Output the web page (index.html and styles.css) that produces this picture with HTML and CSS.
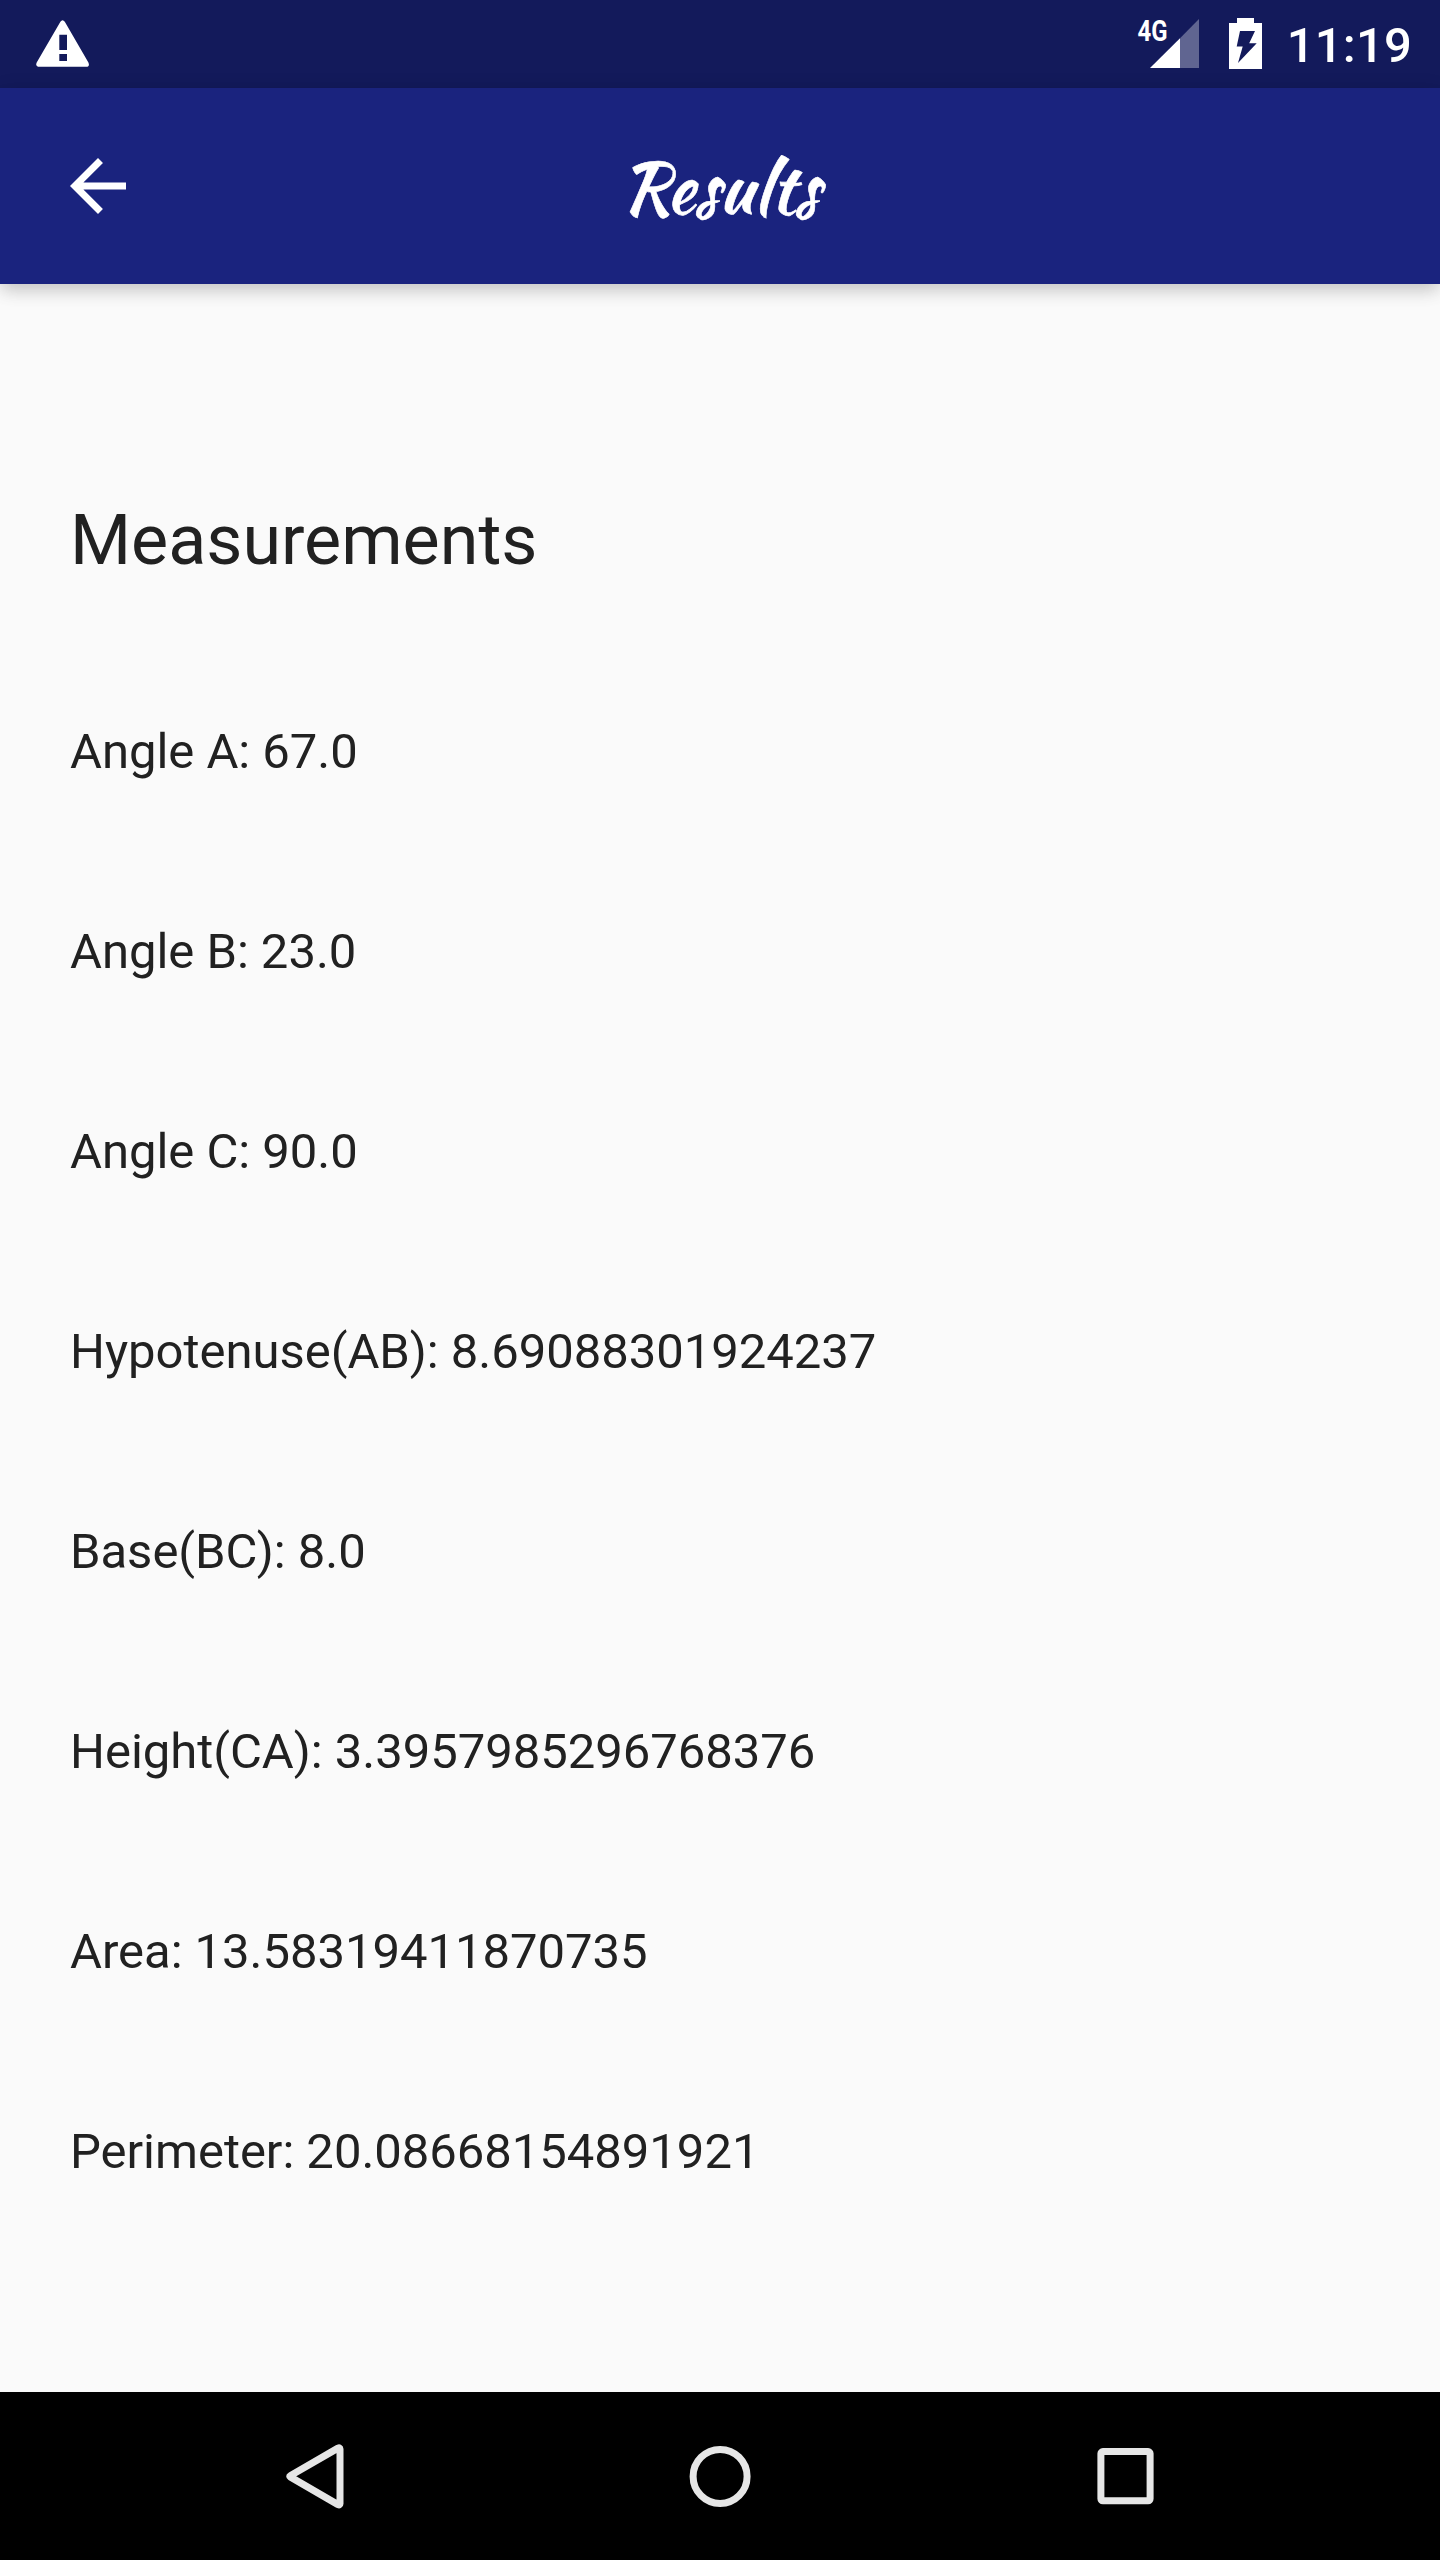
FILE: index.html
```html
<!DOCTYPE html>
<html lang="en">
<head>
<meta charset="utf-8">
<title>Results</title>
<link rel="stylesheet" href="styles.css">
</head>
<body>
<div class="screen">
  <div class="status-bar">
    <svg class="warning-icon" width="54" height="48" viewBox="0 0 54 48">
      <path fill="#fff" fill-rule="evenodd" d="M2 46.7Q-.8 46 .7 42.5L24.4 1.8Q26.5-1.5 28.8 1.8L52.4 42.5Q53.8 46 51.5 46.7ZM23.3 14.7V30H31V14.7ZM23.3 34V41H31V34Z"/>
    </svg>
    <div class="status-icons">
      <svg class="signal-icon" width="64" height="50" viewBox="0 0 64 50">
        <path fill="#fff" opacity=".33" d="M45 19.2 64 0v49H45z"/>
        <path fill="#fff" d="M15 49 45 19.2V49z"/>
        <text class="network" x="2.5" y="22" textLength="30" lengthAdjust="spacingAndGlyphs">4G</text>
      </svg>
      <svg class="battery-icon" width="33" height="51" viewBox="0 0 33 51">
        <path fill="#fff" fill-rule="evenodd" d="M8 0h17v5h8v46H0V5h8zM11 13 7.7 28.5h6L9 45 27.7 25.2h-7.5L26 13z"/>
      </svg>
      <span class="clock">11:19</span>
    </div>
  </div>
  <header class="app-bar">
    <svg class="back-arrow" width="84" height="84" viewBox="0 0 24 24">
      <path fill="#fff" d="M20 11H7.83l5.59-5.59L12 4l-8 8 8 8 1.41-1.41L7.83 13H20v-2z"/>
    </svg>
    <h1 class="title">Results</h1>
  </header>
  <main class="content">
    <h2 class="heading">Measurements</h2>
    <p class="row">Angle A: 67.0</p>
    <p class="row">Angle B: 23.0</p>
    <p class="row">Angle C: 90.0</p>
    <p class="row">Hypotenuse(AB): 8.69088301924237</p>
    <p class="row">Base(BC): 8.0</p>
    <p class="row">Height(CA): 3.3957985296768376</p>
    <p class="row">Area: 13.58319411870735</p>
    <p class="row">Perimeter: 20.08668154891921</p>
  </main>
  <nav class="nav-bar">
    <svg width="84" height="84" viewBox="0 0 84 84"><path class="outline" d="M17.2 41.8 65 14.1Q67 13.2 67 15V69.7Q67 71.5 65 70.6L17.2 42.9Q16.2 42.3 17.2 41.8Z"/></svg>
    <svg width="84" height="84" viewBox="0 0 84 84"><circle class="outline" cx="42.1" cy="42.4" r="27"/></svg>
    <svg width="84" height="84" viewBox="0 0 84 84"><rect class="outline" x="17.9" y="17.6" width="49.2" height="49.2" rx="2"/></svg>
  </nav>
</div>
</body>
</html>
```
FILE: styles.css
```css
* { box-sizing: border-box; margin: 0; }

body {
  font-family: Roboto, sans-serif;
  background: #fafafa;
  color: #212121;
}

.screen {
  display: flex;
  flex-direction: column;
  width: 1440px;
  height: 2560px;
}

.status-bar {
  display: flex;
  justify-content: space-between;
  height: 88px;
  padding: 18px 28px 0 36px;
  background: #131a5b;
  color: #fff;
}

.warning-icon { margin-top: 2px; }

.status-icons {
  display: flex;
  align-items: flex-start;
}

.signal-icon { margin: 1px 30px 0 0; overflow: visible; }
.battery-icon { margin-right: 25px; }

.network {
  font-size: 29px;
  font-weight: 700;
  fill: #fff;
}

.clock {
  font-size: 49px;
  font-weight: 500;
  line-height: 56px;
  letter-spacing: .2px;
}

.app-bar {
  display: grid;
  grid-template-columns: 84px 1fr 84px;
  align-items: center;
  height: 196px;
  padding: 0 56px;
  background: #1a237e;
  color: #fff;
  box-shadow: 0 8px 16px -2px rgba(0, 0, 0, .13), 0 4px 20px rgba(0, 0, 0, .12);
}

.title {
  justify-self: center;
  padding-top: 3px;
  font-family: "Kaushan Script", cursive;
  font-size: 70px;
  font-weight: 400;
  line-height: 84px;
  -webkit-text-stroke: .6px #fff;
}

.content {
  flex: 1;
  padding: 215px 70px 0;
}

.heading {
  margin-bottom: 70px;
  font-size: 70px;
  font-weight: 400;
  line-height: 82px;
}

.row {
  height: 200px;
  padding-top: 72px;
  font-size: 49px;
  line-height: 58px;
  letter-spacing: -.03px;
}

.nav-bar {
  display: grid;
  grid-template-columns: repeat(3, 405px);
  place-content: center;
  justify-items: center;
  height: 168px;
  background: #000;
}

.outline {
  fill: none;
  stroke: #e6e6e6;
  stroke-width: 7;
  stroke-linejoin: round;
}
```
